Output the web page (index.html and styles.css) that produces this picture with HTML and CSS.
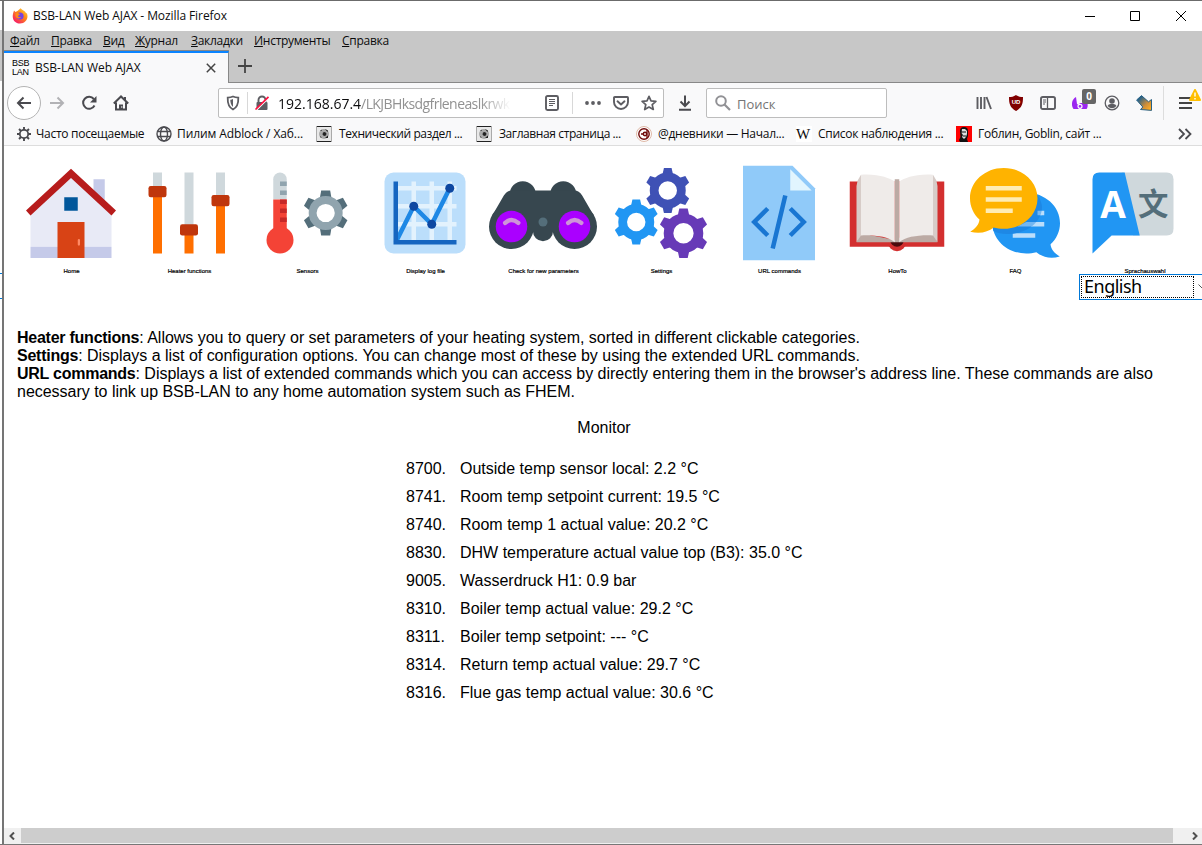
FILE: index.html
```html
<!DOCTYPE html>
<html lang="ru">
<head>
<meta charset="utf-8">
<title>BSB-LAN Web AJAX</title>
<link rel="stylesheet" href="styles.css">
</head>
<body>
<div class="desktop">
<div class="edge"></div>
<div class="window">
  <header class="titlebar">
    <svg class="fox" viewBox="0 0 16 16"><defs><linearGradient id="fx" x1="1" y1="0" x2="0.2" y2="1"><stop offset="0" stop-color="#ffe044"/><stop offset=".45" stop-color="#ff8a16"/><stop offset="1" stop-color="#f5156c"/></linearGradient></defs><path fill="url(#fx)" d="M1.2 5L2 2.500 3.500 4 5.500 3 8.600.3C10 2 13 3 14 5l1 .5c1.800 5-1.500 10-7 10S-.5 11 1.200 5z"/><circle cx="8" cy="8" r="3.600" fill="#7543e3"/><path fill="#ff8a16" d="M3.500 5.500c2-1 3 0 4.500.5-.5 1.500-2 1-2 2.500 1 1 2 .5 3 .5-1.500 2.500-5 1.500-5.500-1z"/></svg>
    <span class="title">BSB-LAN Web AJAX - Mozilla Firefox</span>
    <svg class="winbtns" viewBox="0 0 102 12" fill="none" stroke="#000"><path d="M0 6.500h10M45.500 1.500h9v9h-9zM91 1l10 10M101 1L91 11"/></svg>
  </header>
  <nav class="menubar">
    <span class="m1"><u>Ф</u>айл</span><span class="m2"><u>П</u>равка</span><span class="m3"><u>В</u>ид</span><span class="m4"><u>Ж</u>урнал</span><span class="m5"><u>З</u>акладки</span><span class="m6"><u>И</u>нструменты</span><span class="m7"><u>С</u>правка</span>
  </nav>
  <div class="tabs">
    <div class="tab">
      <span class="favicon"><b>BSB</b><b>LAN</b></span>
      <span class="tabtitle">BSB-LAN Web AJAX</span>
      <svg class="tabclose" viewBox="0 0 10 10"><path d="M.8.8l8.400 8.400M9.200.8L.8 9.200" stroke="#444" stroke-width="1.500"/></svg>
    </div>
    <div class="tabrest"><svg viewBox="0 0 14 14"><path d="M7 0v14M0 7h14" stroke="#444" stroke-width="1.800"/></svg></div>
  </div>
  <div class="toolbar">
    <span class="back"><svg class="i16" viewBox="0 0 16 16"><path class="ln" d="M15 8H2M7.500 2.500L2 8l5.500 5.500"/></svg></span>
    <svg class="i16 fwd" viewBox="0 0 16 16"><path class="ln" d="M1 8h13M8.500 2.500L14 8l-5.500 5.500"/></svg>
    <svg class="i16 reload" viewBox="0 0 16 16"><path class="ln" d="M13.500 10.500A6 6 0 1 1 12.800 4"/><path d="M15.500 1v6.500H9z" fill="#4a4a4f"/></svg>
    <svg class="i16 home" viewBox="0 0 16 16"><path class="ln" d="M.8 8.500L8 1.500l7.200 7M3 7.500V14.500h10V7.500"/><path fill="#4a4a4f" d="M6 15V9.500h4V15zM11 2h2v4l-2-2z"/><circle cx="8.800" cy="12" r=".7" fill="#fff"/></svg>
    <div class="urlbar">
      <svg class="i16 shield" viewBox="0 0 16 16"><path d="M8 1.500c2 .8 4 1 5.300 1.100C13.500 8 12 12.500 8 14.500 4 12.500 2.500 8 2.700 2.600 4 2.500 6 2.300 8 1.500z" fill="none" stroke="#5d5d62" stroke-width="1.800"/><path d="M8 4v8c-2-1.500-2.700-4.500-2.700-7.200C6.500 4.700 7 4.500 8 4z" fill="#5d5d62"/></svg>
      <i class="sep"></i>
      <svg class="i16 lock" viewBox="0 0 16 16"><path d="M4.500 7.500V5a3.500 3.500 0 0 1 7 0v2.500" fill="none" stroke="#5d5d62" stroke-width="1.900"/><rect x="2.500" y="7" width="11" height="8" rx="1" fill="#5d5d62"/><path d="M2 15.500L14.500 3" stroke="#fff" stroke-width="1.500"/><path d="M1.500 14.500L14.500 1.800" stroke="#ff0f3f" stroke-width="1.700"/></svg>
      <span class="url"><b>192.168.67.4</b>/LKJBHksdgfrleneaslkrwk</span>
      <svg class="i16 reader" viewBox="0 0 16 16"><rect x="2" y="1" width="12" height="14" rx="1.500" fill="none" stroke="#5d5d62" stroke-width="1.900"/><path d="M5 4.500h6M5 6.500h6M5 8.500h6M5 10.500h4" stroke="#5d5d62"/></svg>
      <i class="sep sep2"></i>
      <svg class="i16 dots" viewBox="0 0 16 16" fill="#5d5d62"><circle cx="2" cy="8" r="1.900"/><circle cx="8" cy="8" r="1.900"/><circle cx="14" cy="8" r="1.900"/></svg>
      <svg class="i16 pocket" viewBox="0 0 16 16" fill="none" stroke="#5d5d62" stroke-width="1.900" stroke-linejoin="round" stroke-linecap="round"><path d="M1.800 2h12.400q.8 0 .8.800V7a7 7 0 0 1-14 0V2.800q0-.8.800-.8z"/><path d="M4.500 6.300L8 9.500l3.500-3.200"/></svg>
      <svg class="i16 star" viewBox="0 0 16 16"><path d="M8 1.300l2 4.500 4.900.5-3.700 3.300 1.100 4.900L8 12l-4.300 2.500 1.100-4.900L1.100 6.300 6 5.800z" fill="none" stroke="#5d5d62" stroke-width="1.700" stroke-linejoin="round"/></svg>
    </div>
    <svg class="i16 download" viewBox="0 0 16 16"><path class="ln" d="M8 .5V11M3.500 6.500L8 11l4.500-4.500M2 14.700h12"/></svg>
    <div class="search"><svg class="i16" viewBox="0 0 16 16"><circle cx="6" cy="6" r="4.800" fill="none" stroke="#919195" stroke-width="2"/><path d="M9.500 9.500L15 15" stroke="#919195" stroke-width="2.200"/></svg><span>Поиск</span></div>
    <svg class="i16 lib" viewBox="0 0 16 16"><path d="M1.500 2v12M5 2v12M8.500 2v12M10.500 2l4.500 12" stroke="#5d5d62" stroke-width="1.900"/></svg>
    <span class="ublock"><svg class="i16" viewBox="0 0 16 16"><path fill="#800000" d="M8 0c2.500 1.700 4.500 2 7 2 0 7-1 10.500-7 14C2 12.500 1 9 1 2c2.500 0 4.500-.3 7-2z"/></svg><b>UD</b></span>
    <svg class="i16 side" viewBox="0 0 16 16"><rect x="1" y="2" width="14" height="12" rx="1.800" fill="none" stroke="#5d5d62" stroke-width="1.900"/><path d="M7.500 2v12" stroke="#5d5d62" stroke-width="1.300"/><path d="M3 5h3M3 7h3M3 9h2" stroke="#5d5d62"/></svg>
    <span class="purple"><svg class="i16" viewBox="0 0 16 16"><path fill="#9b26f0" d="M4 2C0 4-1.500 10 1.500 14h13c1-1 1.500-3 1-6H8L6.500 10 5 9z"/><circle cx="8" cy="11.300" r="2" fill="#9b26f0" stroke="#fff" stroke-width="1.200"/></svg><b>0</b></span>
    <svg class="i16 acct" viewBox="0 0 16 16"><circle cx="8" cy="8" r="6.800" fill="none" stroke="#5d5d62" stroke-width="1.300"/><circle cx="8" cy="6" r="2.800" fill="#5d5d62"/><path d="M3.500 11q1-2 3-2h3q2 0 3 2-4.500 4.500-9 0z" fill="#5d5d62"/></svg>
    <svg class="i16 arrow" viewBox="0 0 16 16"><defs><linearGradient id="ar" x1="0" y1="0" x2="1" y2="1"><stop offset=".2" stop-color="#286287"/><stop offset=".6" stop-color="#c88c3c"/><stop offset=".9" stop-color="#ffab22"/></linearGradient></defs><path fill="url(#ar)" stroke="#286287" stroke-width="1" stroke-linejoin="round" d="M5.500.6L.6 5l6.200 7-2.300 2.500 11 .9V4.500l-3 2.300z"/></svg>
    <i class="barsep"></i>
    <span class="burger"><svg viewBox="0 0 16 16"><path d="M1 3h13M1 8h13M1 13h13" stroke="#444" stroke-width="2"/></svg><svg class="warn" viewBox="0 0 12 12"><path d="M6 1l5 10H1z" fill="#ffbf00" stroke="#ffbf00" stroke-width="2" stroke-linejoin="round"/><path d="M6 3.500v4M6 9v1.500" stroke="#fff" stroke-width="1.400"/></svg></span>
  </div>
  <div class="bookmarks">
    <a class="bm first"><svg class="i16" viewBox="0 0 16 16"><circle cx="8" cy="8" r="4.200" fill="none" stroke="#4a4a4f" stroke-width="1.800"/><path d="M8 1v3M8 12v3M1 8h3M12 8h3M3 3l2 2M11 11l2 2M3 13l2-2M11 5l2-2" stroke="#4a4a4f" stroke-width="1.900"/></svg><span class="b1">Часто посещаемые</span></a>
    <a class="bm"><svg class="i16" viewBox="0 0 16 16" fill="none" stroke="#4a4a4f" stroke-width="1.400"><circle cx="8" cy="8" r="7"/><ellipse cx="8" cy="8" rx="3.500" ry="7"/><path d="M1.500 5.500h13M1.500 10.500h13"/></svg><span class="b2">Пилим Adblock / Хаб...</span></a>
    <a class="bm"><svg class="i16" viewBox="0 0 16 16"><rect width="16" height="16" fill="#e8e8e8"/><path d="M0 .5h16M0 15.500h16" stroke="#222"/><path d="M.5 0v16M15.500 0v16" stroke="#aaa"/><circle cx="8" cy="8" r="5" fill="#aaa"/><path fill="#222" d="M7 6.500l2-.5 1.500 1.500L10 9.500l-2 .5-1.500-1.500zM9 3l3 1.500-.5 1.500zM4 5l2-1.500L5.500 5zM4 10l2 1.500H4.500zM9 12l3-2.500V12z"/></svg><span class="b3">Технический раздел ...</span></a>
    <a class="bm"><svg class="i16" viewBox="0 0 16 16"><rect width="16" height="16" fill="#e8e8e8"/><path d="M0 .5h16M0 15.500h16" stroke="#222"/><path d="M.5 0v16M15.500 0v16" stroke="#aaa"/><circle cx="8" cy="8" r="5" fill="#aaa"/><path fill="#222" d="M7 6.500l2-.5 1.500 1.500L10 9.500l-2 .5-1.500-1.500zM9 3l3 1.500-.5 1.500zM4 5l2-1.500L5.500 5zM4 10l2 1.500H4.500zM9 12l3-2.500V12z"/></svg><span class="b4">Заглавная страница ...</span></a>
    <a class="bm"><svg class="i16" viewBox="0 0 16 16"><circle cx="8" cy="8" r="7.500" fill="#fff" stroke="#dfb9a7"/><circle cx="8" cy="8" r="5.200" fill="none" stroke="#700b0b" stroke-width="1.400"/><circle cx="9" cy="8" r="2.400" fill="#700b0b"/><path d="M5 8h5M11 4v8" stroke="#700b0b" stroke-width="1.300"/><circle cx="9" cy="8" r=".9" fill="#fff"/></svg><span class="b5">@дневники — Начал...</span></a>
    <a class="bm"><span class="wiki">W</span><span class="b6">Список наблюдения ...</span></a>
    <a class="bm"><svg class="i16" viewBox="0 0 16 16"><path fill="#f00" d="M0 0h16v16H0z"/><path fill="#111" d="M4 5q0-4 4-4t4 4v5l-1 3 1 3H4l-1-2 1.500-3z"/><path fill="#ddd" d="M6 3h3l2 2v3l-1 3-2 2-2-2 1-2-1.500-2z"/><path stroke="#111" d="M5 6h5M7 10h3"/></svg><span class="b7">Гоблин, Goblin, сайт ...</span></a>
    <svg class="more" viewBox="0 0 14 12"><path d="M1 1l5 5-5 5M7.500 1l5 5-5 5" fill="none" stroke="#4a4a4f" stroke-width="1.800"/></svg>
  </div>

  <main class="page">
    <div class="icons">
      <a class="cell"><svg viewBox="0 0 48 48"><path fill="#e8eaf6" d="M42 39H6V23L24 6l18 17z"/><path fill="#c5cae9" d="M39 21l-5-5V9h5zM6 39h36v5H6z"/><path fill="#b71c1c" d="M24 4.300L4 22.900l2 2.200L24 8.400l18 16.700 2-2.200z"/><path fill="#d84315" d="M18 28h12v16H18z"/><path fill="#01579b" d="M21 17h6v6h-6z"/><rect x="27" y="35.500" width="1" height="3" rx=".5" fill="#ff8a65"/></svg><span>Home</span></a>
      <a class="cell"><svg viewBox="0 0 48 48"><path fill="#cfd8dc" d="M8 6h4v8H8zM22 6h4v25h-4zM36 6h4v13h-4z"/><path fill="#ff6f00" d="M8 15h4v27H8zM22 32h4v10h-4zM36 19h4v23h-4z"/><g fill="#bf360c"><rect x="6" y="12" width="8" height="5" rx="1"/><rect x="20" y="29" width="8" height="5" rx="1"/><rect x="34" y="16" width="8" height="5" rx="1"/></g></svg><span>Heater functions</span></a>
      <a class="cell"><svg viewBox="0 0 48 48"><path fill="#cfd8dc" d="M9 18V9a3 3 0 0 1 6 0v9z"/><path fill="#f44336" d="M9 18h6v15H9z"/><circle cx="12" cy="36" r="6" fill="#f44336"/><path fill="#90a4ae" d="M12 10h3v2h-3zM12 14h3v2h-3z"/><path fill="#c62828" d="M12 18h3v2h-3zM12 22h3v2h-3zM12 26h3v2h-3z"/><g transform="translate(32.300 24)"><g fill="#546e7a"><path id="tooth" d="M-2-10h4l.7 4h-5.400z"/><use href="#tooth" transform="rotate(60)"/><use href="#tooth" transform="rotate(120)"/><use href="#tooth" transform="rotate(180)"/><use href="#tooth" transform="rotate(240)"/><use href="#tooth" transform="rotate(300)"/></g><circle r="5.800" fill="none" stroke="#90a4ae" stroke-width="3.500"/></g></svg><span>Sensors</span></a>
      <a class="cell"><svg viewBox="0 0 48 48"><rect x="6" y="6" width="36" height="36" rx="4" fill="#bbdefb"/><path stroke="#e3f2fd" stroke-width="2" d="M19 10v26M27 10v26M35 10v26M12 13h26M12 21h26M12 29h26"/><path fill="none" stroke="#1e88e5" stroke-width="2" d="M11 37l8-16 8 8 8-16"/><path fill="#1565c0" d="M10 10h2v26h26v2H10z"/><g fill="#0d47a1"><circle cx="19" cy="21" r="2"/><circle cx="27" cy="29" r="2"/><circle cx="35" cy="13" r="2"/></g></svg><span>Display log file</span></a>
      <a class="cell"><svg viewBox="0 0 48 48"><g fill="#37474f"><circle cx="15" cy="15.700" r="5.800"/><circle cx="33" cy="15.700" r="5.800"/><circle cx="10" cy="30" r="10"/><circle cx="38" cy="30" r="10"/><path d="M1.500 25L6.600 16.200Q8 14 10 14h28q2 0 3.400 2.200L46.500 25 38 32h-9.500a4.500 4.500 0 0 1-9 0H10z"/></g><circle cx="24" cy="28" r="2" fill="#546e7a"/><g fill="#a0f"><circle cx="10" cy="30" r="7"/><circle cx="38" cy="30" r="7"/></g><path fill="none" stroke="#ce93d8" stroke-width="2" stroke-linecap="round" d="M7.200 28.400q2.800-2.600 5.800 0M35.200 28.400q2.800-2.600 5.800 0"/></svg><span>Check for new parameters</span></a>
      <a class="cell"><svg viewBox="0 0 48 48"><defs><g id="gear"><path id="t2" d="M-1.700-10h3.400l.9 4h-5.200z"/><use href="#t2" transform="rotate(60)"/><use href="#t2" transform="rotate(120)"/><use href="#t2" transform="rotate(180)"/><use href="#t2" transform="rotate(240)"/><use href="#t2" transform="rotate(300)"/><path d="M8 0A8 8 0 1 1-8 0 8 8 0 1 1 8 0zM4.100 0A4.100 4.100 0 1 0-4.100 0 4.100 4.100 0 1 0 4.100 0z" fill-rule="evenodd"/></g></defs><use href="#gear" transform="translate(27 14)" fill="#3f51b5"/><use href="#gear" transform="translate(13 28)" fill="#2196f3"/><use href="#gear" transform="translate(34 33) scale(1.100)" fill="#673ab7"/></svg><span>Settings</span></a>
      <a class="cell"><svg viewBox="0 0 48 48"><path fill="#90caf9" d="M40 45H8V3h22l10 10z"/><path fill="#e1f5fe" d="M38.500 14H29V4.500z"/><path fill="none" stroke="#1976d2" stroke-width="2" d="M26.800 16.200L21.200 39.800M19 22l-6 6 6 6M29 22l6 6-6 6"/></svg><span>URL commands</span></a>
      <a class="cell"><svg viewBox="0 0 48 48"><path fill="#d32f2f" d="M3 10h42v29H3z"/><circle cx="24" cy="37" r="4" fill="#d32f2f"/><path fill="#4a0a0c" d="M21 36h6a3 3 0 0 1-6 0z"/><path fill="#bcaaa4" d="M23 9h2v26l15-2 2 4H6l2-4 15 3z"/><path fill="#d7ccc8" d="M8 7L6.500 9.500 6 12v25l2-3zM40 7l1.500 2.500.5 2.500v25l-2-3z"/><path fill="#efebe9" d="M8 7c8-.5 12.500 1.500 15 3v27c-3-2.500-9-3.300-15-3zM40 7c-8-.5-12.500 1.500-15 3v27c3-2.500 9-3.300 15-3z"/></svg><span>HowTo</span></a>
      <a class="cell"><svg viewBox="0 0 48 48"><path fill="#2196f3" d="M44 28.500C44 21 37.300 15 29 15s-15 6-15 13.500S20.700 42 29 42c1.600 0 3.100-.2 4.500-.6 2.500 2 6 3.200 10.400 1.900-2.300-1.200-4-3.300-4.100-5.400 2.600-2.500 4.200-5.700 4.200-9.400z"/><path fill="#bbdefb" d="M21 23h16v2H21zM21 28h16v2H21zM23 33h10v2H23z"/><path fill="#1e88e5" d="M34 16.200c1.300 1.500 2 3.700 2 5.300 0 6.200-6.800 12-15.500 11.800-2.600 0-4.500-.5-6.100-1.300-.3-1-.4-2-.4-3z"/><path fill="#bbdefb" opacity=".55" d="M29 28h5l-2.500 2H25zM34 23h2v2h-2z"/><path fill="#ffb300" d="M4 17.500C4 10 10.700 4 19 4s15 6 15 13.500S27.300 31 19 31c-1.600 0-3.100-.2-4.500-.6-2.500 2-6 3-10.400 1.900 2.300-1.200 4-3.300 4.100-5.400C5.600 24.400 4 21.200 4 17.500z"/><path fill="#ffecb3" d="M11 12h16v2H11zM11 17h16v2H11zM11 22h12v2H11z"/></svg><span>FAQ</span></a>
      <div class="cell lang"><svg viewBox="0 0 48 48"><path fill="#cfd8dc" d="M19 6h20q3 0 3 3v22q0 3-3 3H24z"/><path fill="#2196f3" d="M9 6h11.300L27 34H14.500L6 42V9q0-3 3-3z"/><text x="15.100" y="26" class="la">A</text><text x="33" y="24.700" class="lz">文</text></svg><span>Sprachauswahl</span>
        <div class="select"><div class="value">English</div><svg viewBox="0 0 10 6"><path d="M.5.500L5 5l4.500-4.500" fill="none" stroke="#555"/></svg></div>
      </div>
    </div>
    <div class="intro">
      <div><b>Heater functions</b>: Allows you to query or set parameters of your heating system, sorted in different clickable categories.</div>
      <div><b>Settings</b>: Displays a list of configuration options. You can change most of these by using the extended URL commands.</div>
      <div><b>URL commands</b>: Displays a list of extended commands which you can access by directly entering them in the browser's address line. These commands are also</div>
      <div>necessary to link up BSB-LAN to any home automation system such as FHEM.</div>
    </div>
    <h1>Monitor</h1>
    <div class="list">
      <span>8700.</span><span>Outside temp sensor local: 2.2 °C</span>
      <span>8741.</span><span>Room temp setpoint current: 19.5 °C</span>
      <span>8740.</span><span>Room temp 1 actual value: 20.2 °C</span>
      <span>8830.</span><span>DHW temperature actual value top (B3): 35.0 °C</span>
      <span>9005.</span><span>Wasserdruck H1: 0.9 bar</span>
      <span>8310.</span><span>Boiler temp actual value: 29.2 °C</span>
      <span>8311.</span><span>Boiler temp setpoint: --- °C</span>
      <span>8314.</span><span>Return temp actual value: 29.7 °C</span>
      <span>8316.</span><span>Flue gas temp actual value: 30.6 °C</span>
    </div>
  </main>
  <div class="scroll"><svg viewBox="0 0 6 8"><path d="M5 .5L1.500 4 5 7.500"/></svg><i></i><svg viewBox="0 0 6 8"><path d="M1 .5L4.500 4 1 7.500"/></svg></div>
</div>
</div>
</body>
</html>
```
FILE: styles.css
```css
* { box-sizing: border-box; }
body { margin: 0; background: #fff; font: 12px/16px "Open Sans", "Noto Sans", sans-serif; color: #0c0c0d; overflow: hidden; }
svg { display: block; flex: none; }
span, div, a { white-space: nowrap; }
.desktop { display: flex; width: 1202px; height: 845px; overflow: hidden; border-top: 1px solid #6b6b6b; border-bottom: 1px solid #777; }
.edge { width: 2px; background: linear-gradient(#fff 29px, #c7c7c7 29px, #c7c7c7 80px, #fff 80px, #fff 272px, #0078d7 272px, #0078d7 273px, #fff 273px, #fff 297px, #0078d7 297px, #0078d7 298px, #fff 298px); }
.window { width: 1200px; border-left: 2px solid #757575; display: flex; flex-direction: column; overflow: hidden; }

.titlebar { height: 30px; flex: none; display: flex; align-items: center; padding: 0 15px 1px 8px; }
.fox { width: 16px; height: 16px; margin-right: 5px; }
.title { letter-spacing: -.08px; padding-top: 1px; }
.winbtns { width: 102px; height: 12px; margin-left: auto; }
.menubar { height: 20px; flex: none; display: flex; padding: 2px 0 0 6px; background: #c7c7c7; }
.menubar span { flex: none; letter-spacing: -.28px; }
.menubar u { text-underline-offset: 1px; text-decoration-thickness: 1px; text-decoration-skip-ink: none; }
.m1 { width: 41px; } .m2 { width: 52px; } .m3 { width: 32px; } .m4 { width: 56px; } .m5 { width: 63px; } .m6 { width: 88px; } .m7 { width: 60px; }
.tabs { height: 32px; flex: none; display: flex; background: #c7c7c7; }
.tab { width: 225px; display: flex; align-items: center; background: #f9f9fa; border-top: 2px solid #0a84ff; border-right: 1px solid #888; padding-left: 8px; box-shadow: 0 -1px 0 #888; }
.favicon { width: 18px; display: flex; flex-direction: column; font: 9px/9px "Liberation Sans", sans-serif; color: #000; }
.favicon b { font-weight: 400; letter-spacing: -.3px; }
.tabtitle { margin-left: 5px; width: 171px; letter-spacing: 0; }
.tabclose { width: 10px; height: 10px; }
.tabrest { flex: 1; border-bottom: 1px solid #888; padding: 8px 0 0 9px; }
.tabrest svg { width: 14px; height: 14px; }

.toolbar { height: 39px; flex: none; display: flex; align-items: center; background: #f9f9fa; padding: 1px 0 0 3px; }
.i16 { width: 16px; height: 16px; flex: none; }
.ln { fill: none; stroke: #4a4a4f; stroke-width: 2; }
.back { width: 34px; height: 34px; border: 1px solid #b4b4b4; border-radius: 50%; background: #fff; display: flex; align-items: center; justify-content: center; flex: none; }
.fwd { margin-left: 8px; opacity: .4; }
.reload, .home { margin-left: 16px; }
.urlbar { width: 446px; height: 30px; margin-left: 89px; border: 1px solid #bdbdbd; border-radius: 2px; background: #fff; display: flex; align-items: center; flex: none; }
.shield { margin-left: 6px; }
.sep { width: 1px; height: 22px; background: #d8d8d8; margin-left: 6px; }
.lock { margin-left: 6px; }
.url { width: 235px; margin-left: 8px; font-size: 14px; line-height: 20px; color: #919191; letter-spacing: -.58px; -webkit-mask-image: linear-gradient(90deg, #000 86%, transparent 99%); mask-image: linear-gradient(90deg, #000 86%, transparent 99%); padding-top: 1px; }
.url b { font-weight: 400; color: #0c0c0d; letter-spacing: 0; }
.reader { margin-left: 31px; }
.sep2 { margin-left: 12px; }
.dots { margin-left: 12px; }
.pocket, .star { margin-left: 12px; }
.download { margin-left: 13px; }
.search { width: 181px; height: 30px; margin-left: 13px; border: 1px solid #bdbdbd; border-radius: 2px; background: #fff; display: flex; align-items: center; padding-left: 8px; color: #757575; font-size: 13px; flex: none; }
.search span { margin-left: 6px; padding-top: 1px; }
.lib { margin-left: 89px; }
.ublock, .side, .purple, .acct, .arrow { margin-left: 16px; }
.ublock, .purple, .burger { position: relative; flex: none; }
.ublock b { position: absolute; left: 0; top: 3px; width: 16px; text-align: center; font: bold 6px/8px "Liberation Sans", sans-serif; color: #fff; }
.purple b { position: absolute; left: 10px; top: -6px; width: 14px; height: 15px; border-radius: 2px; background: #666; color: #fff; font: bold 10px/15px "Open Sans", sans-serif; text-align: center; }
.barsep { width: 1px; height: 34px; margin-left: 11px; background: #ddd; }
.burger { margin-left: 14px; }
.burger svg { width: 16px; height: 16px; }
.burger .warn { position: absolute; left: 11px; top: -6px; width: 12px; height: 12px; }

.bookmarks { height: 24px; flex: none; display: flex; align-items: center; background: #f9f9fa; border-bottom: 1px solid #ddd; padding-left: 12px; }
.bm { width: 160px; display: flex; align-items: center; gap: 6px; flex: none; }
.first { width: 140px; gap: 4px; }
.bm span { letter-spacing: -.28px; padding-top: 1px; }
.bm .b2 { margin-left: -1px; letter-spacing: -.1px; }
.bm .b3, .bm .b4 { margin-left: 1px; letter-spacing: -.4px; }
.bm .wiki { width: 16px; font: 15px/16px "Liberation Serif", serif; background: #fff; padding: 0; }
.more { width: 14px; height: 12px; margin-left: 62px; }

.page { flex: 1; overflow: hidden; padding: 13px 0 0 13px; font: 16px/18px "Liberation Sans", Arial, sans-serif; color: #000; }
.icons { display: flex; height: 170px; }
.cell { width: 118px; flex: none; display: block; }
.cell > svg { width: 108px; height: 108px; }
.cell > span { display: block; width: 109px; text-align: center; font-size: 6px; line-height: 8px; -webkit-text-stroke: .2px #000; }
.lang > span { width: 132px; }
.la { font: bold 16.5px "Open Sans", sans-serif; fill: #fff; text-anchor: middle; }
.lz { font: bold 13.5px "Noto Sans CJK SC", sans-serif; fill: #546e7a; text-anchor: middle; }
.select { width: 134px; height: 26px; margin-top: -1px; border: 1px solid #0078d7; padding: 1px; display: flex; align-items: center; background: #fff; }
.value { width: 113px; height: 22px; border: 1px dotted #000; padding-left: 2px; font: 18px/20px "Noto Sans", sans-serif; letter-spacing: -.5px; }
.value { line-height: 18px; }
.select svg { width: 10px; height: 6px; margin-left: 4px; }
.intro { letter-spacing: -.02px; }
.intro b { letter-spacing: -.25px; }
h1 { font: inherit; margin: 18px 0 0; width: 1174px; text-align: center; }
.list { display: grid; grid-template-columns: 54px auto; line-height: 28px; margin: 18px 0 0 389px; justify-content: start; }

.scroll { height: 16px; flex: none; display: flex; align-items: center; background: #f0f0f0; padding-left: 5px; }
.scroll svg { width: 6px; height: 8px; fill: none; stroke: #505050; stroke-width: 2; }
.scroll i { width: 1152px; height: 15px; margin: 0 19px 1px 6px; background: #cdcdcd; flex: none; }
```
